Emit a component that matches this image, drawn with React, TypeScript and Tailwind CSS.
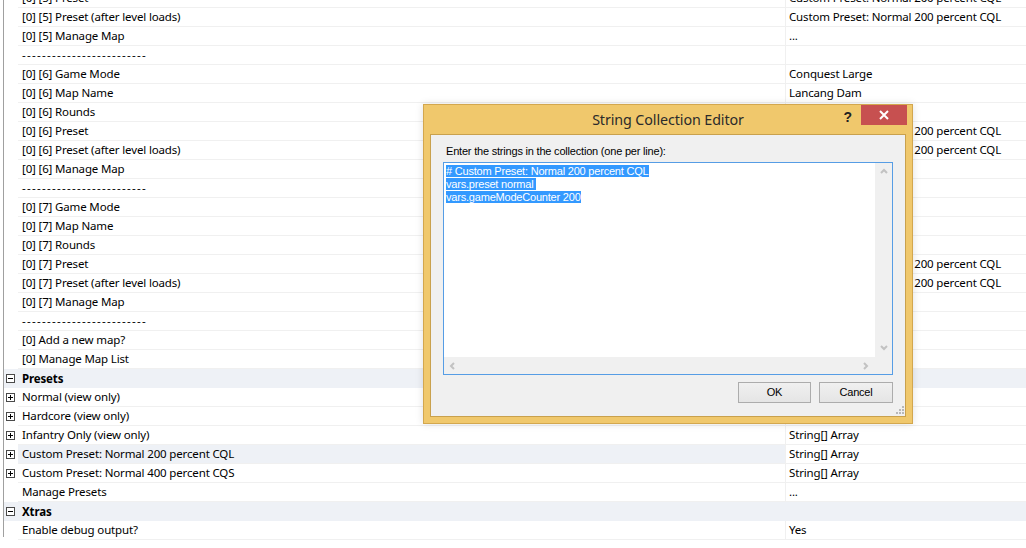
type Row = {
  name: string
  value?: string
  kind?: 'item' | 'cat' | 'expand'
  selected?: boolean
}

const CQL = 'Custom Preset: Normal 200 percent CQL'
const DASHES = '-------------------------'

const rows: Row[] = [
  { name: '[0] [5] Preset', value: CQL },
  { name: '[0] [5] Preset (after level loads)', value: CQL },
  { name: '[0] [5] Manage Map', value: '...' },
  { name: DASHES },
  { name: '[0] [6] Game Mode', value: 'Conquest Large' },
  { name: '[0] [6] Map Name', value: 'Lancang Dam' },
  { name: '[0] [6] Rounds', value: '1' },
  { name: '[0] [6] Preset', value: CQL },
  { name: '[0] [6] Preset (after level loads)', value: CQL },
  { name: '[0] [6] Manage Map', value: '...' },
  { name: DASHES },
  { name: '[0] [7] Game Mode', value: 'Conquest Large' },
  { name: '[0] [7] Map Name', value: 'Lancang Dam' },
  { name: '[0] [7] Rounds', value: '1' },
  { name: '[0] [7] Preset', value: CQL },
  { name: '[0] [7] Preset (after level loads)', value: CQL },
  { name: '[0] [7] Manage Map', value: '...' },
  { name: DASHES },
  { name: '[0] Add a new map?', value: '...' },
  { name: '[0] Manage Map List', value: '...' },
  { name: 'Presets', kind: 'cat' },
  { name: 'Normal (view only)', value: 'String[] Array', kind: 'expand' },
  { name: 'Hardcore (view only)', value: 'String[] Array', kind: 'expand' },
  { name: 'Infantry Only (view only)', value: 'String[] Array', kind: 'expand' },
  { name: 'Custom Preset: Normal 200 percent CQL', value: 'String[] Array', kind: 'expand', selected: true },
  { name: 'Custom Preset: Normal 400 percent CQS', value: 'String[] Array', kind: 'expand' },
  { name: 'Manage Presets', value: '...' },
  { name: 'Xtras', kind: 'cat' },
  { name: 'Enable debug output?', value: 'Yes' },
]

function ToggleBox({ open }: { open: boolean }) {
  return (
    <svg width="9" height="9" viewBox="0 0 9 9" className="ml-[2px] shrink-0">
      <rect x="0.5" y="0.5" width="8" height="8" fill="white" stroke="#4a4a4a" />
      <line x1="2" y1="4.5" x2="7" y2="4.5" stroke="#000" />
      {!open && <line x1="4.5" y1="2" x2="4.5" y2="7" stroke="#000" />}
    </svg>
  )
}

function GridRow({ row }: { row: Row }) {
  if (row.kind === 'cat') {
    return (
      <div className="flex h-[19px] items-center bg-[#eef1f6]">
        <div className="flex w-[14px] shrink-0 items-center">
          <ToggleBox open />
        </div>
        <div className="pl-[4px] font-bold">{row.name}</div>
      </div>
    )
  }
  const isDivider = row.name === DASHES
  return (
    <div className="flex h-[19px]">
      <div className="flex w-[14px] shrink-0 items-center">
        {row.kind === 'expand' && <ToggleBox open={false} />}
      </div>
      <div className="flex flex-1 border-b border-[#f0f0f0]">
        <div
          className={`w-[768px] shrink-0 border-r border-[#f0f0f0] pl-[4px] leading-[18px] ${
            row.selected ? 'bg-[#eef1f6]' : ''
          } ${isDivider ? 'tracking-[1.3px]' : ''}`}
        >
          {row.name}
        </div>
        <div className="flex-1 pl-[3px] leading-[18px] whitespace-nowrap">{row.value}</div>
      </div>
    </div>
  )
}

function Chevron({ dir }: { dir: 'up' | 'down' | 'left' | 'right' }) {
  const pts = {
    up: '1,5 4,2 7,5',
    down: '1,2 4,5 7,2',
    left: '5,1 2,4 5,7',
    right: '2,1 5,4 2,7',
  }[dir]
  return (
    <svg width="8" height="8" viewBox="0 0 8 8">
      <polyline points={pts} fill="none" stroke="#c2c2c2" strokeWidth="2" />
    </svg>
  )
}

function StringCollectionEditor() {
  const lines = ['# Custom Preset: Normal 200 percent CQL', 'vars.preset normal ', 'vars.gameModeCounter 200']
  return (
    <div className="absolute left-[423px] top-[104px] flex h-[320px] w-[490px] flex-col border border-[#d3a74e] bg-[#f0c86c] shadow-[0_0_8px_rgba(0,0,0,0.12)]">
      {/* Title bar */}
      <div className="relative flex h-[29px] shrink-0 items-center justify-center">
        <span className="font-['Noto_Sans',sans-serif] text-[14.3px] tracking-[-0.1px] text-[#2b2b2b]">
          String Collection Editor
        </span>
        <span className="absolute right-[60px] top-[4px] font-['Liberation_Sans',sans-serif] text-[14px] font-bold leading-[16px] text-[#222]">
          ?
        </span>
        <div className="absolute right-[5px] top-0 flex h-[20px] w-[46px] items-center justify-center bg-[#c75050]">
          <svg width="10" height="10" viewBox="0 0 10 10">
            <path d="M1 1 L9 9 M9 1 L1 9" stroke="white" strokeWidth="2" />
          </svg>
        </div>
      </div>

      {/* Client area */}
      <div className="relative mx-[6px] mb-[6px] flex flex-1 flex-col border border-[#c9a14d] bg-[#f0f0f0] px-[12px] font-['Liberation_Sans',Arial,sans-serif] text-[11px] tracking-[-0.2px] text-black">
        <div className="mt-[10px] ml-[3px] leading-[13px]">Enter the strings in the collection (one per line):</div>

        <div className="mt-[4px] flex h-[213px] flex-col border border-[#569de5] bg-white">
          <div className="flex flex-1">
            <div className="flex-1 px-[2px] pt-[2px]">
              {lines.map((l) => (
                <div key={l} className="h-[13px] leading-[13px]">
                  <span className="bg-[#3399ff] whitespace-pre text-white">{l}</span>
                </div>
              ))}
            </div>
            <div className="flex w-[17px] flex-col items-center justify-between bg-[#f0f0f0] py-[5px]">
              <Chevron dir="up" />
              <Chevron dir="down" />
            </div>
          </div>
          <div className="flex h-[17px] items-center justify-between bg-[#f0f0f0] pr-[22px] pl-[5px]">
            <Chevron dir="left" />
            <Chevron dir="right" />
          </div>
        </div>

        <div className="mt-[7px] flex justify-end gap-[8px]">
          <button className="h-[21px] w-[73px] border border-[#acacac] bg-gradient-to-b from-[#f0f0f0] to-[#e5e5e5] text-[11px]">
            OK
          </button>
          <button className="h-[21px] w-[74px] border border-[#acacac] bg-gradient-to-b from-[#f0f0f0] to-[#e5e5e5] text-[11px]">
            Cancel
          </button>
        </div>

        <svg width="8" height="8" viewBox="0 0 8 8" className="absolute right-[1px] bottom-[2px]">
          <rect x="6" y="0" width="2" height="2" fill="#b8b8b8" />
          <rect x="3" y="3" width="2" height="2" fill="#b8b8b8" />
          <rect x="6" y="3" width="2" height="2" fill="#b8b8b8" />
          <rect x="0" y="6" width="2" height="2" fill="#b8b8b8" />
          <rect x="3" y="6" width="2" height="2" fill="#b8b8b8" />
          <rect x="6" y="6" width="2" height="2" fill="#b8b8b8" />
        </svg>
      </div>
    </div>
  )
}

export default function App() {
  return (
    <div className="relative h-[548px] w-[1026px] overflow-hidden bg-white pl-[3px] font-['Noto_Sans','Segoe_UI',sans-serif] text-[11.5px] tracking-[-0.15px] text-black">
      <div className="h-full border-l border-[#a0a0a0]">
        <div className="-mt-[11px]">
          {rows.map((r, i) => (
            <GridRow key={i} row={r} />
          ))}
        </div>
      </div>
      <StringCollectionEditor />
    </div>
  )
}
